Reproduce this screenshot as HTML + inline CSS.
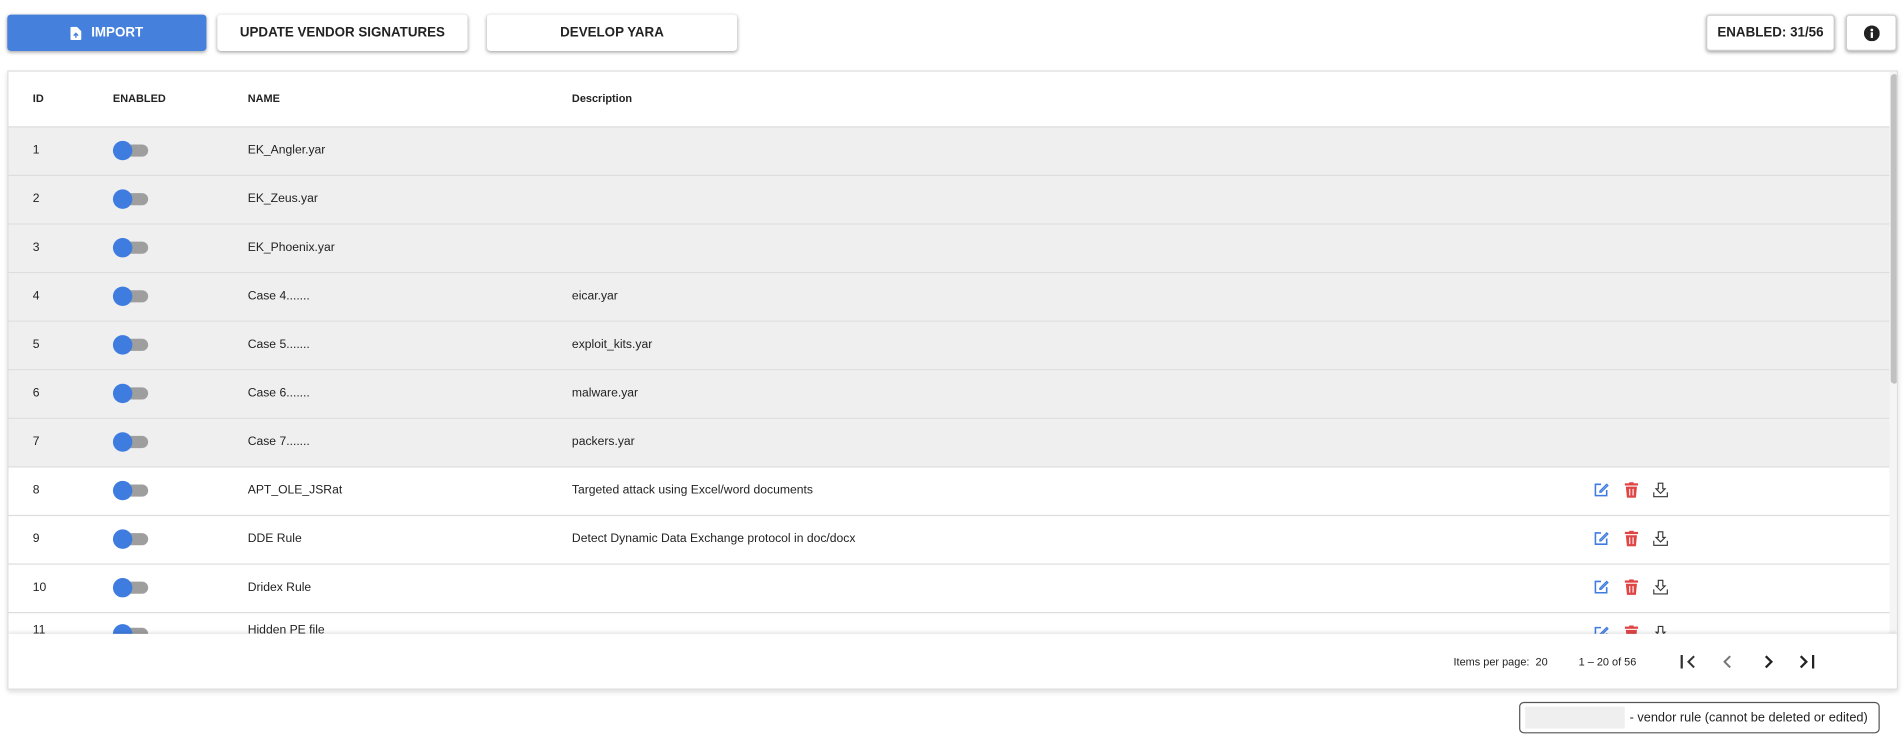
<!DOCTYPE html>
<html><head><meta charset="utf-8"><style>
*{box-sizing:border-box;margin:0;padding:0}
body{width:1904px;height:740px;background:#fff;font-family:"Liberation Sans",sans-serif;color:#222;overflow:hidden}
#w{position:absolute;left:0;top:0;width:1568px;height:610px;transform:scale(1.2143);transform-origin:0 0}
.btn{position:absolute;top:12px;height:30px;background:#fff;border-radius:3px;box-shadow:0 1px 3px rgba(0,0,0,.35);font-family:"Liberation Sans Narrow","Liberation Sans",sans-serif;font-weight:bold;font-size:11px;display:flex;align-items:center;justify-content:center;color:#222}
.card{position:absolute;left:6px;top:58px;width:1557px;height:510px;border:1px solid #ddd;box-shadow:0 2px 4px rgba(0,0,0,.15);overflow:hidden;background:#fff}
.hdr{position:absolute;left:0;top:0;width:1549px;height:46px;border-bottom:1px solid #ddd;font-family:"Liberation Sans Narrow","Liberation Sans",sans-serif;font-weight:bold;font-size:9px}
.row{position:absolute;left:0;width:1549px;height:40px;border-bottom:1px solid #ddd;font-size:10px}
.c{position:absolute;top:48%;transform:translateY(-50%);white-space:nowrap}
.tg{position:absolute;left:87px;top:14px;width:28px;height:10px;border-radius:5px;background:#9e9e9e}
.tg:before{content:"";position:absolute;left:-1px;top:-3.5px;width:16px;height:16px;border-radius:50%;background:#3f7ce0}
.ic{position:absolute;top:12px}
.foot{position:absolute;left:0;top:463px;width:1557px;height:47px;background:#fff;box-shadow:0 -1px 3px rgba(0,0,0,.12);font-size:9px}
.sb{position:absolute;left:1549px;top:0;width:8px;height:463px;background:#f5f5f5}
.sb div{position:absolute;left:1px;top:2px;width:6px;height:255px;border-radius:3px;background:#c1c1c1}
</style></head><body><div id="w">
<div class="btn" style="left:6px;width:164px;background:#4680dd;color:#fff">
<svg width="9" height="11" viewBox="0 0 10 12" style="margin-right:8px"><path d="M0 1a1 1 0 0 1 1-1h5l4 4v7a1 1 0 0 1-1 1H1a1 1 0 0 1-1-1z" fill="#fff"/><path d="M5 10V6M3 8l2-2 2 2" stroke="#4680dd" stroke-width="1.3" fill="none"/></svg>IMPORT</div>
<div class="btn" style="left:179px;width:206px">UPDATE VENDOR SIGNATURES</div>
<div class="btn" style="left:401px;width:206px">DEVELOP YARA</div>
<div class="btn" style="left:1405px;width:106px;border:1px solid #ccc">ENABLED: 31/56</div>
<div class="btn" style="left:1520px;width:42px;border:1px solid #ccc"><svg width="13" height="13" viewBox="0 0 14 14"><circle cx="7" cy="7" r="7" fill="#222"/><rect x="6" y="6" width="2" height="5" fill="#fff"/><circle cx="7" cy="4" r="1.2" fill="#fff"/></svg></div>

<div class="card">
<div class="hdr"><span class="c" style="left:20px">ID</span><span class="c" style="left:86px">ENABLED</span><span class="c" style="left:197px">NAME</span><span class="c" style="left:464px">Description</span></div>
<div class="row" style="top:46px;background:#efefef"><span class="c" style="left:20px">1</span><div class="tg"></div><span class="c" style="left:197px">EK_Angler.yar</span></div>
<div class="row" style="top:86px;background:#efefef"><span class="c" style="left:20px">2</span><div class="tg"></div><span class="c" style="left:197px">EK_Zeus.yar</span></div>
<div class="row" style="top:126px;background:#efefef"><span class="c" style="left:20px">3</span><div class="tg"></div><span class="c" style="left:197px">EK_Phoenix.yar</span></div>
<div class="row" style="top:166px;background:#efefef"><span class="c" style="left:20px">4</span><div class="tg"></div><span class="c" style="left:197px">Case 4.......</span><span class="c" style="left:464px">eicar.yar</span></div>
<div class="row" style="top:206px;background:#efefef"><span class="c" style="left:20px">5</span><div class="tg"></div><span class="c" style="left:197px">Case 5.......</span><span class="c" style="left:464px">exploit_kits.yar</span></div>
<div class="row" style="top:246px;background:#efefef"><span class="c" style="left:20px">6</span><div class="tg"></div><span class="c" style="left:197px">Case 6.......</span><span class="c" style="left:464px">malware.yar</span></div>
<div class="row" style="top:286px;background:#efefef"><span class="c" style="left:20px">7</span><div class="tg"></div><span class="c" style="left:197px">Case 7.......</span><span class="c" style="left:464px">packers.yar</span></div>
<div class="row" style="top:326px"><span class="c" style="left:20px">8</span><div class="tg"></div><span class="c" style="left:197px">APT_OLE_JSRat</span><span class="c" style="left:464px">Targeted attack using Excel/word documents</span>
<svg class="ic" style="left:1305px" width="13" height="13" viewBox="0 0 14 14"><path d="M7 2H2v10h10V7" stroke="#3f7ce0" stroke-width="1.4" fill="none"/><path d="M6 8l6-6 1 1-6 6H6z" stroke="#3f7ce0" stroke-width="1.2" fill="none"/></svg>
<svg class="ic" style="left:1331px" width="11" height="13" viewBox="0 0 12 14"><rect x="0" y="1" width="12" height="2" fill="#e04545"/><rect x="4" y="0" width="4" height="2" fill="#e04545"/><path d="M1 4h10l-1 10H2z" fill="#e04545"/><path d="M4.5 6v6M7.5 6v6" stroke="#fff"/></svg>
<svg class="ic" style="left:1354px" width="13" height="13" viewBox="0 0 14 14"><path d="M5 1h4v5h2l-4 4-4-4h2z" stroke="#333" fill="none"/><path d="M1 9v4h12V9" stroke="#333" fill="none"/></svg></div>
<div class="row" style="top:366px"><span class="c" style="left:20px">9</span><div class="tg"></div><span class="c" style="left:197px">DDE Rule</span><span class="c" style="left:464px">Detect Dynamic Data Exchange protocol in doc/docx</span>
<svg class="ic" style="left:1305px" width="13" height="13" viewBox="0 0 14 14"><path d="M7 2H2v10h10V7" stroke="#3f7ce0" stroke-width="1.4" fill="none"/><path d="M6 8l6-6 1 1-6 6H6z" stroke="#3f7ce0" stroke-width="1.2" fill="none"/></svg>
<svg class="ic" style="left:1331px" width="11" height="13" viewBox="0 0 12 14"><rect x="0" y="1" width="12" height="2" fill="#e04545"/><rect x="4" y="0" width="4" height="2" fill="#e04545"/><path d="M1 4h10l-1 10H2z" fill="#e04545"/><path d="M4.5 6v6M7.5 6v6" stroke="#fff"/></svg>
<svg class="ic" style="left:1354px" width="13" height="13" viewBox="0 0 14 14"><path d="M5 1h4v5h2l-4 4-4-4h2z" stroke="#333" fill="none"/><path d="M1 9v4h12V9" stroke="#333" fill="none"/></svg></div>
<div class="row" style="top:406px"><span class="c" style="left:20px">10</span><div class="tg"></div><span class="c" style="left:197px">Dridex Rule</span>
<svg class="ic" style="left:1305px" width="13" height="13" viewBox="0 0 14 14"><path d="M7 2H2v10h10V7" stroke="#3f7ce0" stroke-width="1.4" fill="none"/><path d="M6 8l6-6 1 1-6 6H6z" stroke="#3f7ce0" stroke-width="1.2" fill="none"/></svg>
<svg class="ic" style="left:1331px" width="11" height="13" viewBox="0 0 12 14"><rect x="0" y="1" width="12" height="2" fill="#e04545"/><rect x="4" y="0" width="4" height="2" fill="#e04545"/><path d="M1 4h10l-1 10H2z" fill="#e04545"/><path d="M4.5 6v6M7.5 6v6" stroke="#fff"/></svg>
<svg class="ic" style="left:1354px" width="13" height="13" viewBox="0 0 14 14"><path d="M5 1h4v5h2l-4 4-4-4h2z" stroke="#333" fill="none"/><path d="M1 9v4h12V9" stroke="#333" fill="none"/></svg></div>
<div class="row" style="top:446px"><span class="c" style="left:20px;top:14px">11</span><div class="tg" style="top:12px"></div><span class="c" style="left:197px;top:14px">Hidden PE file</span>
<svg class="ic" style="left:1305px;top:10px" width="13" height="13" viewBox="0 0 14 14"><path d="M7 2H2v10h10V7" stroke="#3f7ce0" stroke-width="1.4" fill="none"/><path d="M6 8l6-6 1 1-6 6H6z" stroke="#3f7ce0" stroke-width="1.2" fill="none"/></svg>
<svg class="ic" style="left:1331px;top:10px" width="11" height="13" viewBox="0 0 12 14"><rect x="0" y="1" width="12" height="2" fill="#e04545"/><rect x="4" y="0" width="4" height="2" fill="#e04545"/><path d="M1 4h10l-1 10H2z" fill="#e04545"/></svg>
<svg class="ic" style="left:1354px;top:10px" width="13" height="13" viewBox="0 0 14 14"><path d="M5 1h4v5h2l-4 4-4-4h2z" stroke="#333" fill="none"/></svg></div>
<div class="sb"><div></div></div>
<div class="foot">
<span class="c" style="left:1190px">Items per page:&nbsp; 20</span>
<span class="c" style="left:1293px">1 – 20 of 56</span>
<svg class="c" style="left:1376px" width="15" height="13" viewBox="0 0 16 14"><path d="M2 1v12" stroke="#333" stroke-width="2"/><path d="M13 2L8 7l5 5" stroke="#333" stroke-width="1.8" fill="none"/></svg>
<svg class="c" style="left:1411px" width="10" height="13" viewBox="0 0 10 14"><path d="M7 2L2 7l5 5" stroke="#777" stroke-width="1.8" fill="none"/></svg>
<svg class="c" style="left:1444px" width="10" height="13" viewBox="0 0 10 14"><path d="M3 2l5 5-5 5" stroke="#222" stroke-width="2" fill="none"/></svg>
<svg class="c" style="left:1474px" width="15" height="13" viewBox="0 0 16 14"><path d="M2 2l5 5-5 5" stroke="#222" stroke-width="2" fill="none"/><path d="M13 1v12" stroke="#222" stroke-width="2"/></svg>
</div>
</div>

<div style="position:absolute;left:1251px;top:578px;width:297px;height:26px;border:1px solid #555;border-radius:4px;font-size:10.5px;display:flex;align-items:center;white-space:nowrap">
<div style="width:82px;height:18px;background:#efefef;margin:0 4px 0 4px;flex:none"></div>- vendor rule (cannot be deleted or edited)</div>
</div></body></html>
